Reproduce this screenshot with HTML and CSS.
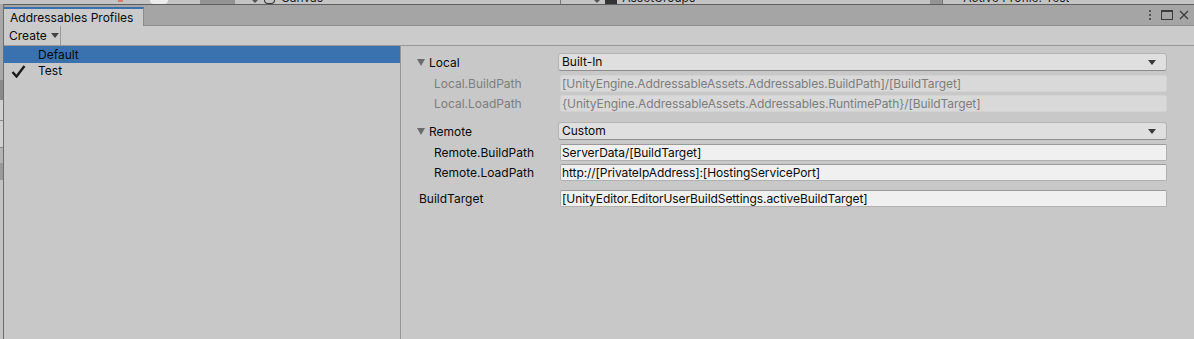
FILE: index.html
```html
<!DOCTYPE html>
<html lang="en">
<head>
    <meta charset="UTF-8">
    <title>Addressables Profiles</title>
    <link rel="stylesheet" href="styles.css">
</head>
<body>
    <div class="behind">
        <span class="bh-dot"></span>
        <span class="bh-cube"></span>
        <span class="bh-block"></span>
        <span class="bh-arrow"></span>
        <span class="bh-circle"></span>
        <span class="bh-text bh-canvas"><span>Canvas</span></span>
        <span class="bh-sep"></span>
        <span class="bh-arrow bh-arrow2"></span>
        <span class="bh-folder"></span>
        <span class="bh-text bh-groups"><span>AssetGroups</span></span>
        <span class="bh-scroll"></span>
        <span class="bh-text bh-active"><span>Active Profile: Test</span></span>
    </div>
    <div class="desk">
        <div class="side-strip"></div>
        <div class="window">
            <div class="tabbar">
                <div class="tab">Addressables Profiles</div>
                <div class="win-icons">
                    <svg width="4" height="10" viewBox="0 0 4 10"><rect x="1" y="0" width="2" height="2" fill="#555"/><rect x="1" y="4" width="2" height="2" fill="#555"/><rect x="1" y="8" width="2" height="2" fill="#555"/></svg>
                    <svg width="12" height="10" viewBox="0 0 12 10"><rect x="0.5" y="0.5" width="11" height="9" fill="none" stroke="#3c3c3c"/><rect x="0" y="0" width="12" height="2" fill="#3c3c3c"/></svg>
                    <svg width="10" height="10" viewBox="0 0 10 10"><path d="M1 1 L9 9 M9 1 L1 9" stroke="#3c3c3c" stroke-width="1.3"/></svg>
                </div>
            </div>
            <div class="toolbar">
                <div class="create">Create <span class="caret"></span></div>
            </div>
            <div class="content">
                <div class="profiles">
                    <div class="profile selected">Default</div>
                    <div class="profile">
                        <svg class="check" width="15" height="13" viewBox="0 0 15 13"><path d="M1.5 7 L5.5 11.5 L13.5 1" fill="none" stroke="#1a1a1a" stroke-width="2.4"/></svg>
                        Test
                    </div>
                </div>
                <div class="inspector">
                    <div class="row group">
                        <div class="label"><span class="fold"></span>Local</div>
                        <div class="dropdown">Built-In<span class="caret"></span></div>
                    </div>
                    <div class="row sub">
                        <div class="label disabled">Local.BuildPath</div>
                        <div class="field disabled">[UnityEngine.AddressableAssets.Addressables.BuildPath]/[BuildTarget]</div>
                    </div>
                    <div class="row sub">
                        <div class="label disabled">Local.LoadPath</div>
                        <div class="field disabled">{UnityEngine.AddressableAssets.Addressables.RuntimePath}/[BuildTarget]</div>
                    </div>
                    <div class="row group second">
                        <div class="label"><span class="fold"></span>Remote</div>
                        <div class="dropdown">Custom<span class="caret"></span></div>
                    </div>
                    <div class="row sub">
                        <div class="label">Remote.BuildPath</div>
                        <div class="field">ServerData/[BuildTarget]</div>
                    </div>
                    <div class="row sub">
                        <div class="label">Remote.LoadPath</div>
                        <div class="field">http://[PrivateIpAddress]:[HostingServicePort]</div>
                    </div>
                    <div class="row plain">
                        <div class="label">BuildTarget</div>
                        <div class="field">[UnityEditor.EditorUserBuildSettings.activeBuildTarget]</div>
                    </div>
                </div>
            </div>
        </div>
    </div>
</body>
</html>
```

FILE: styles.css
```css
body {
    margin: 0;
    height: 339px;
    overflow: hidden;
    background: #bdbdbd;
    font-family: Inter, "Noto Sans", sans-serif;
    font-size: 12px;
    color: #0a0a0a;
}

/* editor windows peeking out behind this one */
.behind {
    height: 4px;
    display: flex;
    overflow: hidden;
    background: #c4c4c4;
}
.behind > span {
    flex: none;
    height: 4px;
}
.bh-dot {
    width: 5px;
    margin-left: 118px;
    background: #d97a6a;
    height: 2px !important;
}
.bh-cube {
    width: 18px;
    margin-left: 27px;
    background: #ececec;
    border-radius: 0 0 5px 5px;
}
.bh-block {
    width: 35px;
    margin-left: 32px;
    background: #939393;
}
.bh-arrow {
    width: 0;
    margin-left: 17px;
    border-left: 3px solid transparent;
    border-right: 3px solid transparent;
    border-top: 3px solid #555;
    height: 0 !important;
}
.bh-circle {
    width: 11px;
    margin-left: 6px;
    box-sizing: border-box;
    border: 1px solid #333;
    border-top: none;
    border-radius: 0 0 6px 6px;
}
.bh-text {
    overflow: hidden;
    color: #1e1e1e;
}
.bh-text span {
    display: block;
    line-height: 0;
    margin-top: -2px;
    white-space: nowrap;
}
.bh-canvas {
    margin-left: 6px;
}
.bh-sep {
    width: 1px;
    margin-left: 237px;
    background: #777;
}
.bh-arrow2 {
    margin-left: 33px;
}
.bh-folder {
    width: 12px;
    margin-left: 5px;
    background: #333;
}
.bh-groups {
    margin-left: 5px;
}
.bh-scroll {
    width: 12px;
    margin-left: 235px;
    background: #949494;
    border-right: 1px solid #777;
}
.bh-active {
    margin-left: 20px;
}

.desk {
    display: flex;
    height: 335px;
}
.side-strip {
    width: 3px;
    flex: none;
    background: linear-gradient(#a8a8a8 0 76px, #8a8a8a 76px 96px, #d0d0d0 96px 116px, #8a8a8a 116px 117px, #d0d0d0 117px 143px, #8a8a8a 143px 144px, #b4b4b4 144px 159px, #9a9a9a 159px 176px, #c4c4c4 176px);
}
.window {
    flex: 1;
    display: flex;
    flex-direction: column;
    border-left: 1px solid #6e6e6e;
    background: #c8c8c8;
}

.tabbar {
    height: 22px;
    box-sizing: border-box;
    display: flex;
    align-items: flex-end;
    justify-content: space-between;
    background: #a5a5a5;
    border-top: 1px solid #5e5e5e;
    border-bottom: 1px solid #8c8c8c;
}
.tab {
    height: 19px;
    width: 140px;
    margin-bottom: -1px;
    padding-left: 6px;
    box-sizing: border-box;
    background: #cbcbcb;
    border-top: 2px solid #3a72b0;
    border-right: 1px solid #8c8c8c;
    line-height: 17px;
}
.win-icons {
    display: flex;
    align-items: center;
    gap: 6px;
    height: 20px;
    padding-right: 5px;
    align-self: center;
}
.win-icons svg:first-child {
    margin-right: 3px;
}

.toolbar {
    height: 20px;
    box-sizing: border-box;
    background: #cbcbcb;
    border-bottom: 1px solid #999;
    display: flex;
}
.create {
    width: 57px;
    box-sizing: border-box;
    padding-left: 5px;
    border-right: 1px solid #9a9a9a;
    line-height: 20px;
}
.caret {
    display: inline-block;
    width: 0;
    height: 0;
    border-left: 4px solid transparent;
    border-right: 4px solid transparent;
    border-top: 5px solid #444;
    vertical-align: 2px;
    margin-left: 1px;
}

.content {
    flex: 1;
    display: flex;
}
.profiles {
    width: 396px;
    flex: none;
    border-right: 1px solid #989898;
}
.profile {
    height: 16px;
    line-height: 16px;
    padding-left: 34px;
    position: relative;
}
.profile.selected {
    background: #3a72b0;
    height: 17px;
    line-height: 17px;
}
.check {
    position: absolute;
    left: 7px;
    top: 2px;
}

.inspector {
    flex: 1;
    padding: 7px 27px 0 16px;
}
.row {
    display: grid;
    grid-template-columns: 141px 1fr;
    align-items: center;
}
.row.group {
    height: 18px;
    margin-bottom: 4px;
}
.row.second {
    margin-top: 10px;
}
.row.sub {
    height: 17px;
    margin-bottom: 3px;
}
.row.sub .label {
    padding-left: 17px;
}
.row.sub .field,
.row.plain .field {
    margin-left: 2px;
}
.row.plain {
    height: 17px;
    margin-top: 9px;
}
.row.plain .label {
    padding-left: 2px;
}
.label {
    display: flex;
    align-items: center;
    white-space: nowrap;
}
.fold {
    width: 0;
    height: 0;
    border-left: 4px solid transparent;
    border-right: 4px solid transparent;
    border-top: 7px solid #6b6b6b;
    margin-right: 4px;
}
.dropdown {
    height: 18px;
    box-sizing: border-box;
    background: #dfdfdf;
    border: 1px solid #b4b4b4;
    border-bottom-color: #8e8e8e;
    border-radius: 3px;
    padding: 0 10px 0 3px;
    line-height: 16px;
    display: flex;
    justify-content: space-between;
    align-items: center;
}
.dropdown .caret {
    border-top-color: #3a3a3a;
    vertical-align: 0;
}
.field {
    height: 17px;
    box-sizing: border-box;
    background: #f0f0f0;
    border: 1px solid #b0b0b0;
    border-top-color: #9a9a9a;
    border-radius: 2px;
    padding-left: 1px;
    line-height: 15px;
    letter-spacing: -0.08px;
    white-space: nowrap;
    overflow: hidden;
}
.field.disabled {
    background: #d9d9d9;
    border-color: #d2d2d2;
    color: #7d7d7d;
}
.label.disabled {
    color: #7d7d7d;
}
```
